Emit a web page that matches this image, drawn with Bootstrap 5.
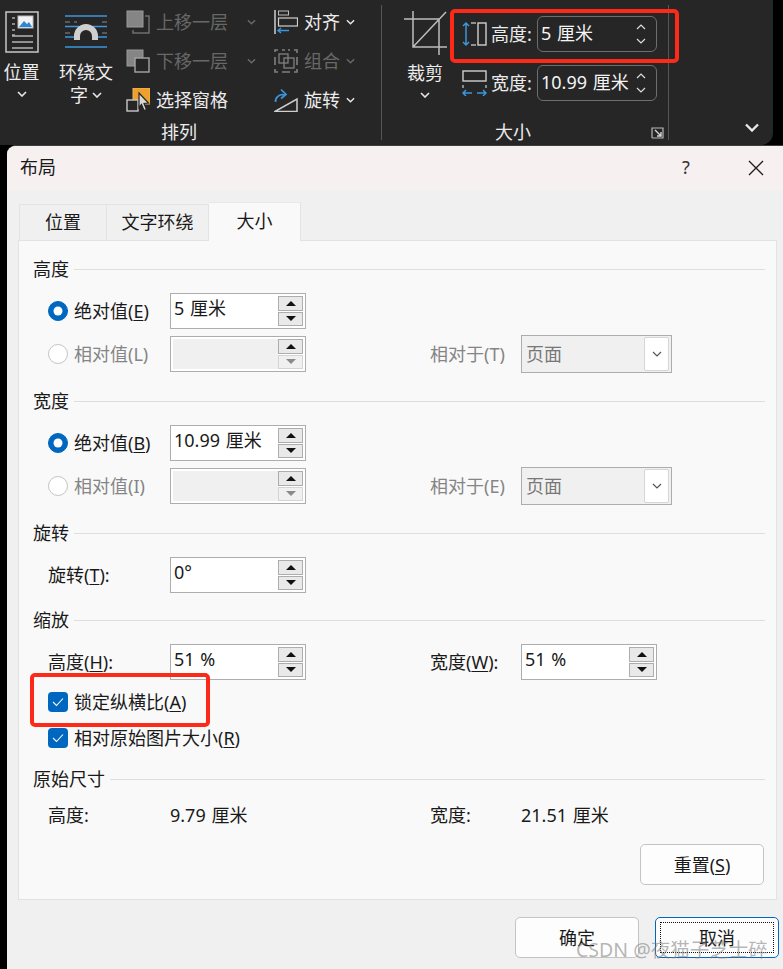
<!DOCTYPE html>
<html lang="zh-CN">
<head>
<meta charset="utf-8">
<title>布局</title>
<link href="https://cdn.jsdelivr.net/npm/bootstrap@5.3.0/dist/css/bootstrap.min.css" rel="stylesheet">
<style>
html,body{margin:0;height:969px;overflow:hidden;background:#000}
body{font-family:"Noto Sans","Noto Sans CJK SC",sans-serif;font-size:18px;line-height:24px;color:#1a1a1a;position:relative;width:783px}
svg{display:block;flex:none}
u{text-underline-offset:2px}
.ribbon{height:145px;width:773px;background:#262626;border-radius:0 0 12px 0;color:#ececec}
.rgroup{height:145px;flex:none}
.rg1{width:381px}.rg2{width:286px}
.rtop{height:120px}
.rlabel{height:25px;line-height:24px}
.rg1 .rlabel{padding-left:161px}
.rg2 .rlabel{padding-left:113px}
.launch{margin-left:120px;margin-top:7px}
.vsep{width:1px;height:135px;margin-top:5px;background:#565656;flex:none}
.bigbtn{flex:none;display:flex;flex-direction:column;align-items:center;text-align:center}
.big-pos{width:43px;padding-top:11px}
.big-wrap{width:60px;margin-left:13px;padding-top:15px}
.big-crop{width:44px;margin-left:21px;margin-top:11px}
.biglbl1{margin-top:7px;height:23px}
.big-wrap .biglbl1{margin-top:12px}
.big-crop .biglbl1{margin-top:6px}
.chev-pos{margin-top:8px;color:#e8e8e8}
.chev-crop{margin-top:8px;color:#e8e8e8}
.cmdcol{flex:none;padding-top:2px}
.cmd-a{width:134px;margin-left:10px}
.cmd-b{width:95px;margin-left:14px}
.cmd{height:39px;display:flex;align-items:center}
.cmd .ci{width:24px;flex:none}
.cmd .ct{margin-left:6px;white-space:nowrap}
.cmd-a .ct{width:85px}
.cmd .cv{margin-left:6px}
.cv-lit{color:#e8e8e8}
.cmd-off{color:#686868}
.sizecol{flex:none;width:196px;margin-left:15px;padding-top:16px}
.sizerow{display:flex;align-items:center;height:36px}
.sizerow+.sizerow{margin-top:13px}
.sizerow .szl{margin-left:4px;width:46px;white-space:nowrap}
.szinput{width:120px;height:36px;border:1px solid #6e6e6e;border-radius:6px;padding-left:3px;display:flex;align-items:center;justify-content:space-between;color:#f4f4f4}
.szinput span{white-space:nowrap;margin-top:-2px;word-spacing:1px}
.szarrows{display:flex;flex-direction:column;gap:8px;margin-right:10px;color:#ddd}
.rbend{margin-left:75px;padding-top:123px;color:#e8e8e8}
.dialog-box{position:relative;margin-left:7px;height:824px;background:#f0f0f0;border-radius:9px 0 0 0;border-top:1px solid #3d3d3d;overflow:hidden}
.dtitle{height:44px;background:#f7f0f0;padding:0 13px;display:flex;align-items:center}
.dtitle .tt{flex:1;margin-top:-3px}
.dtitle .qm{width:20px;margin-right:52px;text-align:center;font-size:18px;color:#333;margin-top:-3px}
.closex{margin-right:6px;margin-top:-1px}
.dbody{padding:12px 6px 0 11px}
.tabbar{height:38px;align-items:flex-end;padding-left:1px;border:0;flex-wrap:nowrap}
.tabbar .nav-link{height:36px;border:1px solid #e3e3e3;border-bottom:0;border-left:0;border-radius:0;background:#f0f0f0;color:#1a1a1a;padding:0;text-align:center;line-height:34px;margin:0}
.tabbar .t1{width:88px;border-left:1px solid #e3e3e3}
.tabbar .t2{width:102px}
.tabbar .nav-link.active{width:92px;height:39px;background:#f9f9f9;line-height:37px;position:relative;z-index:1;margin-bottom:-1px;border-top:1px solid #e8e8e8}
.panel{width:759px;height:660px;background:#f9f9f9;border:1px solid #e2e2e2;padding:16px 11px 0 14px}
.shead{display:flex;align-items:center;height:24px}
.shead::after{content:"";flex:1;height:1px;background:#dedede;margin-left:5px}
.drow{display:flex;align-items:center;height:36px;padding-left:15px;white-space:nowrap}
.m12{margin-top:12px}.m17{margin-top:17px}.m15{margin-top:15px}.m7{margin-top:7px}.m4{margin-top:4px}.m11{margin-top:11px}.m6{margin-top:6px}
.mark-opt{width:20px;height:20px;flex:none;margin:0 6px 0 0}
.form-check-input.rd{background-color:#fff;border:1px solid #c4c4c4;float:none}
.form-check-input.rd:checked{background-color:#0067c0;border-color:#0067c0}
.form-check-input.rd:disabled{opacity:1}
.off{color:#858585}
.w26{width:96px}
.w122{width:122px}
.spin{width:136px;height:36px;border:1px solid #adadad;background:#fff;display:flex;padding:2px;flex:none}
.spin .val{flex:1;padding-left:1px;line-height:24px;margin-top:0;background:#fff;word-spacing:1px}
.spin.dis .val{background:#f0f0f0}
.spbtns{width:25px;display:flex;flex-direction:column;gap:1px;flex:none}
.spb{flex:1;background:#e9e9e9;border:1px solid #adadad;display:flex;align-items:center;justify-content:center}
.spb.dim{background:#f0f0f0;border-color:#d4d4d4}
.tri{width:0;height:0;border-left:5px solid transparent;border-right:5px solid transparent}
.tri.up{border-bottom:5px solid #111}
.tri.dn{border-top:5px solid #111}
.spb.dim .tri.dn{border-top-color:#8a8a8a}
.rlab{margin-left:124px;width:91px}
.selbox{width:151px;height:38px;border:1px solid #adadad;background:#f0f0f0;display:flex;align-items:center;justify-content:space-between;padding:2px 2px 2px 4px;color:#777;flex:none}
.seldrop{width:25px;height:34px;background:#fff;border:1px solid #d6d6d6;border-radius:2px;display:flex;align-items:center;justify-content:center;color:#555}
.chk{width:20px;height:20px;border-radius:4px;background:#0067c0;display:flex;align-items:center;justify-content:center;flex:none;margin-right:6px}
.val-w{width:260px;word-spacing:1px}
.val-x{word-spacing:1px}
.lab-x{width:91px}
.resetrow{display:flex;justify-content:flex-end;padding-right:1px}
.winbtn{width:124px;height:41px;background:#fdfdfd;border:1px solid #c4c4c4;border-radius:5px;color:#1a1a1a;font-size:18px;line-height:24px;padding:0;--bs-btn-hover-bg:#fdfdfd}
.dfoot{display:flex;justify-content:flex-end;gap:16px;padding:17px 0 0 0;margin-right:-2px}
.winbtn.defbtn{border:1px solid #0067c0;position:relative;background:#fdfdfd}
.defbtn::after{content:"";position:absolute;inset:4px;border:1px dotted #111}
.redbox{position:absolute;border:4px solid #fe2a19;border-radius:5px;pointer-events:none;z-index:5}
.rb1{left:450px;top:9px;width:229px;height:54px}
.rb2{left:30px;top:673px;width:180px;height:54px}
.wmark{position:absolute;left:576px;top:937px;font-size:19.500px;line-height:26px;color:rgba(120,120,120,.55);white-space:nowrap;z-index:6}
</style>
</head>
<body>
<svg width="0" height="0" class="position-absolute">
  <symbol id="cv" viewBox="0 0 10 6"><path d="M1 1l4 4 4-4" fill="none" stroke="currentColor" stroke-width="1.6"/></symbol>
  <symbol id="cu" viewBox="0 0 10 6"><path d="M1 5l4-4 4 4" fill="none" stroke="currentColor" stroke-width="1.2"/></symbol>
  <symbol id="cd" viewBox="0 0 10 6"><path d="M1 1l4 4 4-4" fill="none" stroke="currentColor" stroke-width="1.2"/></symbol>
</svg>

<div class="ribbon d-flex">
  <div class="rgroup rg1 d-flex flex-column">
    <div class="rtop d-flex">
      <div class="bigbtn big-pos">
        <svg width="34" height="42" viewBox="0 0 34 42">
          <rect x="1" y="1" width="32" height="40" fill="#262626" stroke="#c8c8c8" stroke-width="1.5"/>
          <rect x="13" y="5" width="15" height="12" fill="#f2f2f2" stroke="#bbb"/>
          <path d="M14 16l5-6 3 3 2-2 3 5z" fill="#2b86d4"/>
          <path d="M7 7h3M7 13h3M7 19h3M7 24h3" stroke="#aaa" stroke-width="1.4"/>
          <path d="M7 25h21M7 31h21M7 37h21" stroke="#b5b5b5" stroke-width="1.4"/>
        </svg>
        <div class="biglbl1">位置</div>
        <svg class="chev-pos" width="10" height="6"><use href="#cv"/></svg>
      </div>
      <div class="bigbtn big-wrap">
        <svg width="42" height="33" viewBox="0 0 42 33">
          <path d="M0 1h42M0 32h42M0 11.500h14M28 11.500h14M0 22h11M31 22h11" stroke="#3a96dd" stroke-width="1.6"/>
          <path d="M0 7h5M0 18h5M37 7h5M37 18h5M9 7h3" stroke="#8a8a8a" stroke-width="1"/>
          <path d="M12 25v-4a9 9 0 0 1 18 0v4" fill="none" stroke="#cfcfcf" stroke-width="6"/>
        </svg>
        <div class="biglbl1 text-nowrap">环绕文</div>
        <div class="d-flex align-items-center">字<svg class="ms-1 cv-lit" width="10" height="6"><use href="#cv"/></svg></div>
      </div>
      <div class="cmdcol cmd-a">
        <div class="cmd cmd-off">
          <svg class="ci" width="24" height="24" viewBox="0 0 24 24"><rect x="1" y="1" width="16" height="16" fill="#858585" stroke="#9a9a9a"/><path d="M19 6h4v17H7v-3" fill="none" stroke="#6e6e6e" stroke-width="1.5"/></svg>
          <span class="ct">上移一层</span>
          <svg class="cv" width="9" height="6"><use href="#cv"/></svg>
        </div>
        <div class="cmd cmd-off">
          <svg class="ci" width="24" height="24" viewBox="0 0 24 24"><rect x="1" y="1" width="16" height="16" fill="#858585" stroke="#9a9a9a"/><rect x="9" y="9" width="14" height="14" fill="#262626" stroke="#a5a5a5" stroke-width="1.4"/></svg>
          <span class="ct">下移一层</span>
          <svg class="cv" width="9" height="6"><use href="#cv"/></svg>
        </div>
        <div class="cmd">
          <svg class="ci" width="24" height="24" viewBox="0 0 24 24"><rect x="7" y="0" width="17" height="16" fill="#eda12c" stroke="#f2b457"/><rect x="1" y="12" width="11" height="11" fill="#262626" stroke="#c8c8c8" stroke-width="1.4"/><path d="M13 5l9.500 10-4.500 .5 2.500 6-2.500 1-2.500-6-2.500 3z" fill="#d8d8d8" stroke="#262626" stroke-width="1.2"/></svg>
          <span class="ct">选择窗格</span>
        </div>
      </div>
      <div class="cmdcol cmd-b">
        <div class="cmd">
          <svg class="ci" width="24" height="24" viewBox="0 0 24 24"><path d="M1 0v24" stroke="#cfcfcf" stroke-width="1.5"/><rect x="4.500" y="1" width="10" height="4" fill="none" stroke="#bcbcbc"/><rect x="4.500" y="8" width="19" height="8" fill="none" stroke="#cfcfcf" stroke-width="1.2"/><path d="M15 20.500H4M7 18l-3 2.500L7 23" fill="none" stroke="#3a96dd" stroke-width="1.5"/></svg>
          <span class="ct">对齐</span>
          <svg class="cv cv-lit" width="9" height="6"><use href="#cv"/></svg>
        </div>
        <div class="cmd cmd-off">
          <svg class="ci" width="24" height="24" viewBox="0 0 24 24"><path d="M1 3V1h3M20 1h3v3M1 20v3h3M20 23h3v-3M8 1h3M14 1h2M8 23h8M1 8v8M23 8v8" fill="none" stroke="#808080" stroke-width="1.6"/><rect x="5" y="5" width="9" height="9" fill="none" stroke="#808080" stroke-width="1.3"/><rect x="10" y="9" width="10" height="10" fill="none" stroke="#808080" stroke-width="1.3"/></svg>
          <span class="ct">组合</span>
          <svg class="cv" width="9" height="6"><use href="#cv"/></svg>
        </div>
        <div class="cmd">
          <svg class="ci" width="24" height="24" viewBox="0 0 24 24"><path d="M1 23.500L23 11v12.500z" fill="none" stroke="#cfcfcf" stroke-width="1.5"/><path d="M1.500 14a7 7 0 0 1 9-7M7 1.500l5 5-5 4" fill="none" stroke="#3a96dd" stroke-width="1.7"/></svg>
          <span class="ct">旋转</span>
          <svg class="cv cv-lit" width="9" height="6"><use href="#cv"/></svg>
        </div>
      </div>
    </div>
    <div class="rlabel">排列</div>
  </div>
  <div class="vsep"></div>
  <div class="rgroup rg2 d-flex flex-column">
    <div class="rtop d-flex">
      <div class="bigbtn big-crop">
        <svg width="44" height="44" viewBox="0 0 44 44">
          <path d="M10 0v36h35M1 8h35v36M10 36L43 1" fill="none" stroke="#bdbdbd" stroke-width="1.5"/>
        </svg>
        <div class="biglbl1">裁剪</div>
        <svg class="chev-crop" width="10" height="6"><use href="#cv"/></svg>
      </div>
      <div class="sizecol">
        <div class="sizerow">
          <svg width="25" height="26" viewBox="0 0 25 26"><path d="M4 2v22M1 5l3-3 3 3M1 21l3 3 3-3" fill="none" stroke="#3a96dd" stroke-width="1.5"/><path d="M9 2h5M9 24h5" stroke="#b5b5b5" stroke-width="1.4"/><rect x="16" y="2" width="8" height="22" fill="none" stroke="#cfcfcf" stroke-width="1.4"/></svg>
          <span class="szl">高度:</span>
          <div class="szinput"><span>5 厘米</span><div class="szarrows"><svg width="10" height="6"><use href="#cu"/></svg><svg width="10" height="6"><use href="#cd"/></svg></div></div>
        </div>
        <div class="sizerow">
          <svg width="25" height="26" viewBox="0 0 25 26"><rect x="1" y="1" width="23" height="10" fill="none" stroke="#cfcfcf" stroke-width="1.4"/><path d="M1 15v3M24 15v3" stroke="#b5b5b5" stroke-width="1.4"/><path d="M1 23h9M15 23h9M4 20l-3 3 3 3M21 20l3 3-3 3" fill="none" stroke="#3a96dd" stroke-width="1.5"/></svg>
          <span class="szl">宽度:</span>
          <div class="szinput"><span>10.99 厘米</span><div class="szarrows"><svg width="10" height="6"><use href="#cu"/></svg><svg width="10" height="6"><use href="#cd"/></svg></div></div>
        </div>
      </div>
    </div>
    <div class="rlabel d-flex">
      <span>大小</span>
      <svg class="launch" width="13" height="12" viewBox="0 0 13 12"><path d="M1 11V1h11v10H1" fill="none" stroke="#b8b8b8" stroke-width="1.2"/><path d="M4 3l6 6M10 5v4H6" fill="none" stroke="#d8d8d8" stroke-width="1.4"/></svg>
    </div>
  </div>
  <div class="vsep"></div>
  <div class="rbend">
    <svg width="16" height="9"><use href="#cv"/></svg>
  </div>
</div>

<div class="dialog-box">
  <div class="dtitle">
    <span class="tt">布局</span>
    <span class="qm">?</span>
    <svg class="closex" width="16" height="16" viewBox="0 0 16 16"><path d="M1 1l14 14M15 1L1 15" stroke="#1f1f1f" stroke-width="1.4"/></svg>
  </div>
  <div class="dbody">
    <ul class="nav tabbar">
      <li class="nav-item"><a class="nav-link t1" href="#">位置</a></li>
      <li class="nav-item"><a class="nav-link t2" href="#">文字环绕</a></li>
      <li class="nav-item"><a class="nav-link active" href="#">大小</a></li>
    </ul>
    <div class="panel">
      <div class="shead">高度</div>
      <div class="drow m12">
        <input class="form-check-input rd mark-opt" type="radio" name="h1" checked>
        <span class="w26">绝对值(<u>E</u>)</span>
        <div class="spin"><div class="val">5 厘米</div><div class="spbtns"><div class="spb"><i class="tri up"></i></div><div class="spb"><i class="tri dn"></i></div></div></div>
      </div>
      <div class="drow m7">
        <input class="form-check-input rd mark-opt" type="radio" name="h1" disabled>
        <span class="w26 off">相对值(L)</span>
        <div class="spin dis"><div class="val"></div><div class="spbtns"><div class="spb"><i class="tri up"></i></div><div class="spb dim"><i class="tri dn"></i></div></div></div>
        <span class="rlab off">相对于(T)</span>
        <div class="selbox"><span>页面</span><div class="seldrop"><svg width="10" height="6"><use href="#cd"/></svg></div></div>
      </div>

      <div class="shead m17">宽度</div>
      <div class="drow m12">
        <input class="form-check-input rd mark-opt" type="radio" name="w1" checked>
        <span class="w26">绝对值(<u>B</u>)</span>
        <div class="spin"><div class="val">10.99 厘米</div><div class="spbtns"><div class="spb"><i class="tri up"></i></div><div class="spb"><i class="tri dn"></i></div></div></div>
      </div>
      <div class="drow m7">
        <input class="form-check-input rd mark-opt" type="radio" name="w1" disabled>
        <span class="w26 off">相对值(I)</span>
        <div class="spin dis"><div class="val"></div><div class="spbtns"><div class="spb"><i class="tri up"></i></div><div class="spb dim"><i class="tri dn"></i></div></div></div>
        <span class="rlab off">相对于(E)</span>
        <div class="selbox"><span>页面</span><div class="seldrop"><svg width="10" height="6"><use href="#cd"/></svg></div></div>
      </div>

      <div class="shead m17">旋转</div>
      <div class="drow m12">
        <span class="w122">旋转(<u>T</u>):</span>
        <div class="spin"><div class="val">0°</div><div class="spbtns"><div class="spb"><i class="tri up"></i></div><div class="spb"><i class="tri dn"></i></div></div></div>
      </div>

      <div class="shead m15">缩放</div>
      <div class="drow m12">
        <span class="w122">高度(<u>H</u>):</span>
        <div class="spin"><div class="val">51 %</div><div class="spbtns"><div class="spb"><i class="tri up"></i></div><div class="spb"><i class="tri dn"></i></div></div></div>
        <span class="rlab">宽度(<u>W</u>):</span>
        <div class="spin"><div class="val">51 %</div><div class="spbtns"><div class="spb"><i class="tri up"></i></div><div class="spb"><i class="tri dn"></i></div></div></div>
      </div>
      <div class="drow m4">
        <span class="chk"><svg width="12" height="10" viewBox="0 0 12 10"><path d="M1 5l3.500 3.500L11 1.500" fill="none" stroke="#fff" stroke-width="1.1"/></svg></span>
        <span>锁定纵横比(<u>A</u>)</span>
      </div>
      <div class="drow">
        <span class="chk"><svg width="12" height="10" viewBox="0 0 12 10"><path d="M1 5l3.500 3.500L11 1.500" fill="none" stroke="#fff" stroke-width="1.1"/></svg></span>
        <span>相对原始图片大小(<u>R</u>)</span>
      </div>

      <div class="shead m11">原始尺寸</div>
      <div class="drow m6">
        <span class="w122">高度:</span>
        <span class="val-w">9.79 厘米</span>
        <span class="lab-x">宽度:</span>
        <span class="val-x">21.51 厘米</span>
      </div>
      <div class="resetrow m11">
        <button type="button" class="btn winbtn">重置(<u>S</u>)</button>
      </div>
    </div>
    <div class="dfoot">
      <button type="button" class="btn winbtn">确定</button>
      <button type="button" class="btn winbtn defbtn">取消</button>
    </div>
  </div>
</div>

<div class="redbox rb1"></div>
<div class="redbox rb2"></div>
<div class="wmark">CSDN @夜猫子芝士碎</div>
</body>
</html>
